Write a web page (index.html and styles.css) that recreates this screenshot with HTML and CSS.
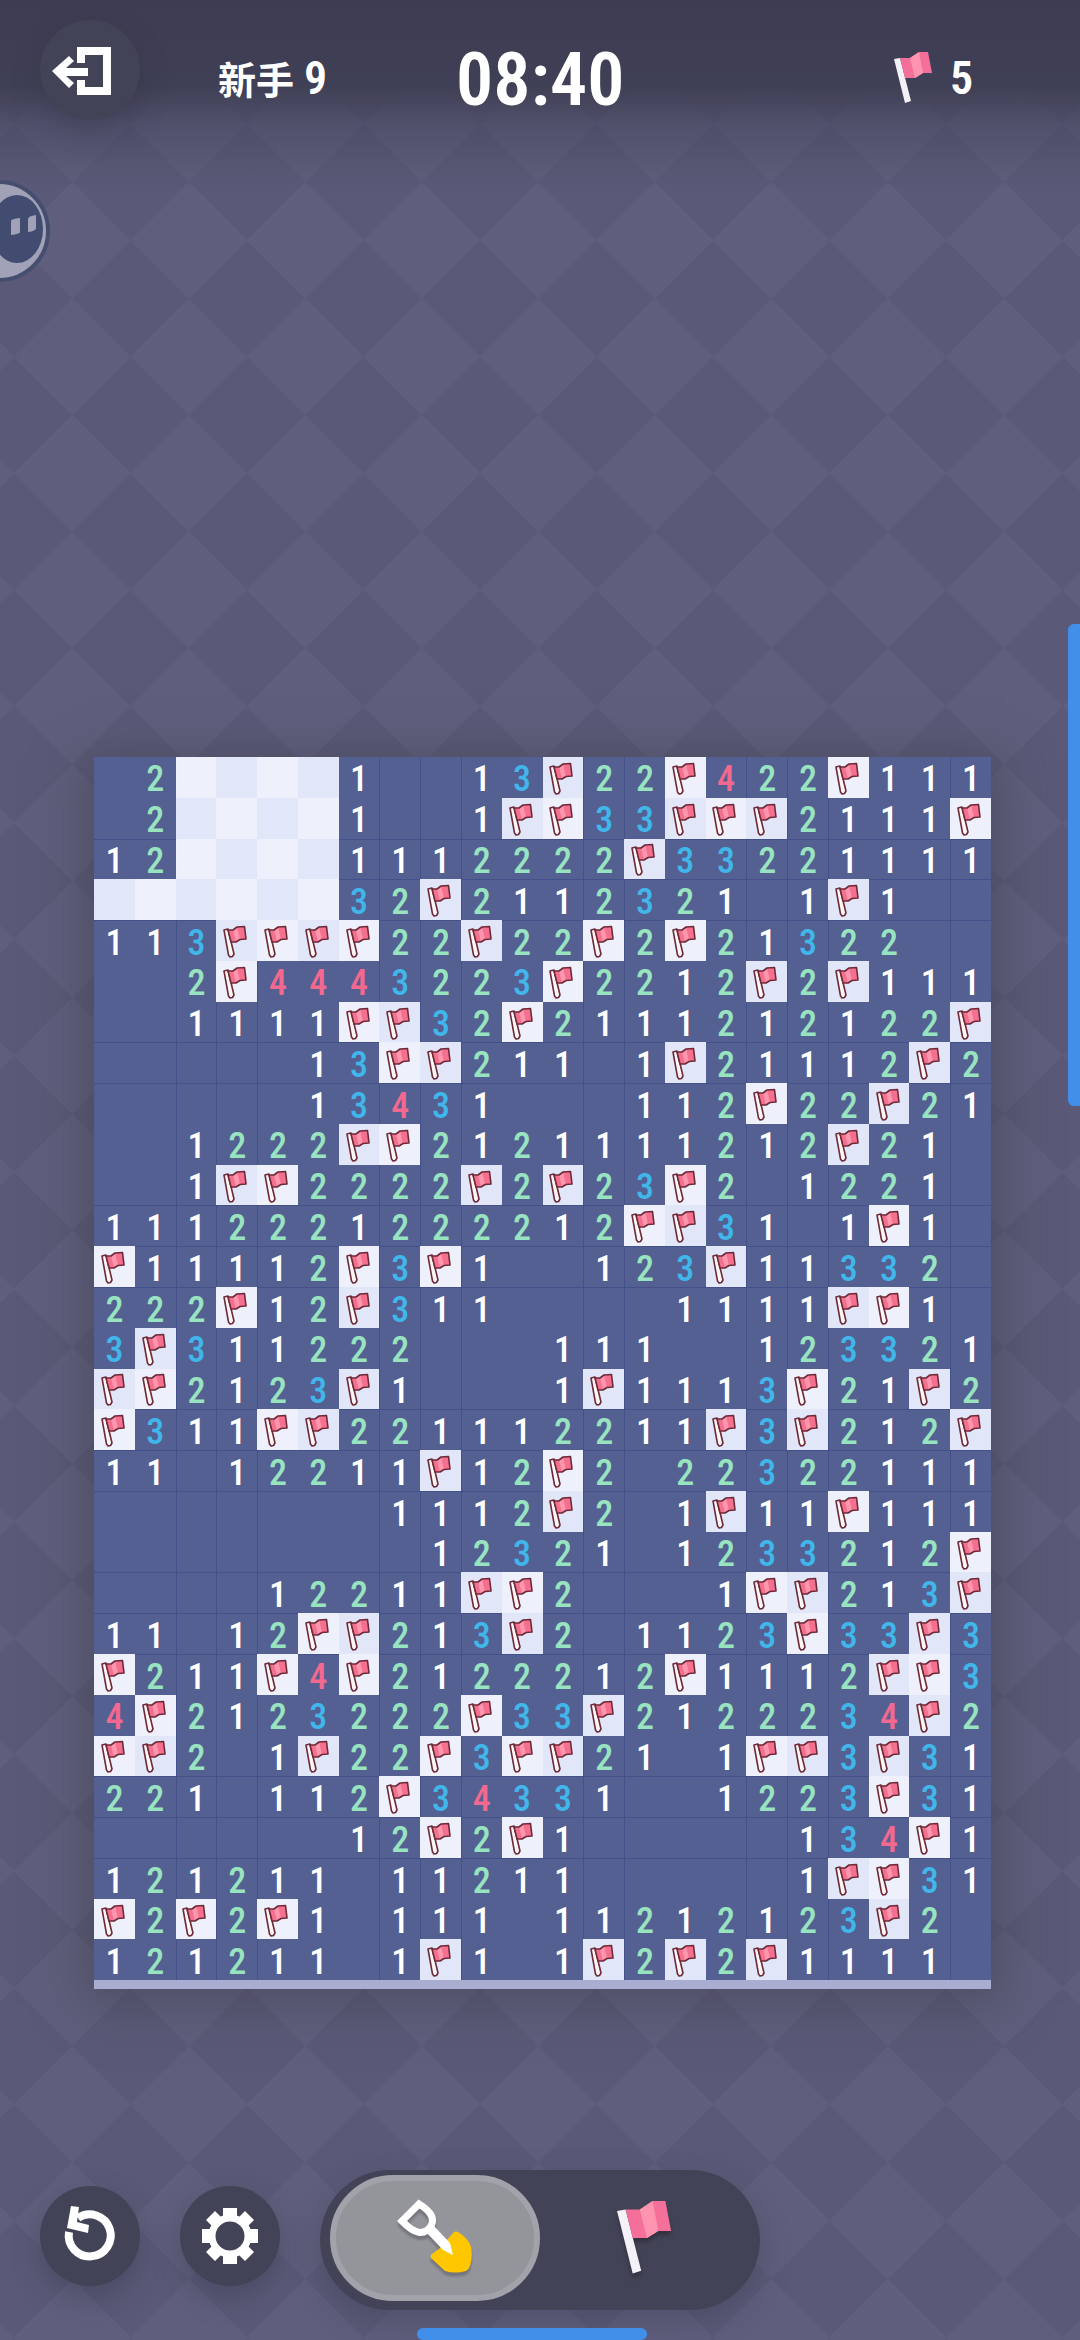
FILE: index.html
```html
<!DOCTYPE html>
<html lang="zh-CN">
<head>
<meta charset="utf-8">
<meta name="viewport" content="width=device-width, initial-scale=1">
<title>新手 9</title>
<link rel="stylesheet" href="styles.css">
</head>
<body>
<svg class="sprites" aria-hidden="true">
  <symbol id="flag" viewBox="0 0 40 52">
    <path fill="#f4f2f8" d="M0 7l6-1 11 43-6 2z"/>
    <path fill="#f4709a" d="M6 6h10l9-6h9l4 21h-9l-8 5H11z"/>
    <path fill="#ff94b0" d="M16 6l9-6 4 21-8 5z"/>
  </symbol>
  <symbol id="mine-flag" viewBox="0 0 41 41">
    <path fill="#fff6f6" stroke="#6e2a38" stroke-width="1.6" stroke-linejoin="round" d="M8 10l4-1 6 25-1.500 2.500-2.500.5-1.500-2z"/>
    <path fill="#f4708f" d="M12 10h5l4-3 7.500-.5L30 19l-6 .5-4 2.500h-5z"/>
    <path fill="#ff96ae" d="M17 10l4-3 3 12.500-4 2.500z"/>
    <path fill="none" stroke="#6e2a38" stroke-width="1.6" stroke-linejoin="round" d="M12 10h5l4-3 7.500-.5L30 19l-6 .5-4 2.500h-5z"/>
  </symbol>
</svg>

<div class="app">
  <header class="topbar">
    <button class="round exit" aria-label="退出">
      <svg viewBox="0 0 100 100">
        <path fill="#fff" d="M37 27h34v48H37V60h8v7h18V35h-18v8h-8z"/>
        <path fill="#fff" d="M12 51l17-15 5 5-8 7h22v8H26l8 7-5 5z"/>
      </svg>
    </button>
    <div class="level"><span class="level-name">新手</span><span class="count">9</span></div>
    <time class="timer">08:40</time>
    <div class="remaining"><svg class="flag-small"><use href="#flag"/></svg><span class="count">5</span></div>
  </header>

  <main class="field">
    <div class="board" id="board"></div>
  </main>

  <footer class="toolbar">
    <button class="round" aria-label="重新开始">
      <svg viewBox="0 0 100 100">
        <path fill="none" stroke="#fff" stroke-width="8" d="M29 46a21 21 0 1 0 9-14"/>
        <path fill="#fff" d="M31 20l8 1-2 15 12 3-1 8-21-5z"/>
      </svg>
    </button>
    <button class="round" aria-label="设置">
      <svg viewBox="0 0 100 100">
        <circle cx="50" cy="50" r="18" fill="none" stroke="#fff" stroke-width="7"/>
        <g fill="#fff">
          <path d="M43 22h14v9H43zM43 69h14v9H43zM22 43h9v14h-9zM69 43h9v14h-9z"/>
          <path d="M26 34l9-9 7 7-9 9zM58 32l7-7 9 9-7 7zM26 66l7-7 9 9-7 7zM58 68l9-9 7 7-9 9z"/>
        </g>
      </svg>
    </button>
    <div class="modes">
      <button class="mode active" aria-label="挖掘" aria-pressed="true">
        <svg class="shovel" viewBox="-2 0 80 80">
          <path fill="#ffc700" d="M57 34q2-1 4 0 11 7 13 15 2 10-1 19-1 3-4 5-11 3-21 0L34 60q-1-2 1-4l7-5z"/>
          <path fill="none" stroke="#fff" stroke-width="7" d="M22 6L5 23q19 20 29 5 6-11-12-22z"/>
          <path fill="#fff" d="M36 27l17 18 3 12-10-5-17-18z"/>
        </svg>
      </button>
      <button class="mode" aria-label="插旗" aria-pressed="false">
        <svg class="flag-large"><use href="#flag"/></svg>
      </button>
    </div>
  </footer>
</div>

<svg class="assistant" viewBox="0 0 52 104" aria-hidden="true">
  <circle cx="-1" cy="52" r="49" fill="#a1a2b8" stroke="#464e70" stroke-width="4"/>
  <ellipse cx="17" cy="50" rx="26" ry="34" fill="#414c70"/>
  <path fill="#a1a2b8" d="M11 42q0-2 9-3v14q0 2-9 3zM28 40q0-3 8-4v13q0 3-8 4z"/>
</svg>
<div class="edge-bar side"></div>
<div class="edge-bar bottom"></div>
<script src="board.js"></script>
</body>
</html>
```
FILE: styles.css
```css
* {
  box-sizing: border-box;
}

body {
  margin: 0;
  color: #fff;
  font-family: "Roboto Condensed", "Liberation Sans Narrow", Roboto, "Noto Sans CJK SC", sans-serif;
  background-color: #5a5977;
  background-image: url("data:image/svg+xml,%3Csvg xmlns='http://www.w3.org/2000/svg' viewBox='0 0 4 4'%3E%3Cpath fill='%235f5f7d' d='M1 0l1 1-1 1-1-1zM3 0l1 1-1 1-1-1zM1 2l1 1-1 1-1-1zM3 2l1 1-1 1-1-1z'/%3E%3C/svg%3E");
  background-size: 233px 233px;
  background-position: 14px 182px;
}

button {
  padding: 0;
  border: 0;
  color: inherit;
  font: inherit;
  cursor: pointer;
}

.sprites {
  position: absolute;
  width: 0;
  height: 0;
}

.app {
  display: flex;
  flex-direction: column;
  min-height: 100vh;
}

/* Top bar */
.topbar {
  display: grid;
  grid-template-columns: 178px 1fr 168px 1fr 178px;
  align-items: start;
  height: 190px;
  padding: 20px 40px 0;
  background: linear-gradient(#3d3c52, #3f3f55 45%, rgba(70, 70, 95, 0.6) 65%, rgba(90, 89, 119, 0));
}

.round {
  width: 100px;
  height: 100px;
  border-radius: 50%;
  background: #434357;
  box-shadow: 0 12px 28px rgba(50, 50, 70, 0.35);
}

.round svg {
  display: block;
  width: 100px;
  height: 100px;
}

.level,
.remaining {
  display: flex;
  align-items: center;
  height: 116px;
}

.level {
  gap: 10px;
}

.level-name {
  font-family: "Noto Sans CJK SC", sans-serif;
  font-size: 38px;
  font-weight: 700;
  line-height: 40px;
}

.count {
  font-size: 46px;
  font-weight: 600;
  line-height: 52px;
}

.timer {
  font-size: 74px;
  font-weight: 600;
  line-height: 120px;
  text-align: center;
}

.remaining {
  grid-column: 5;
  gap: 16px;
  padding-left: 32px;
}

.flag-small {
  width: 40px;
  height: 52px;
}

/* Board */
.field {
  padding: 567px 89px 0 94px;
}

.board {
  display: grid;
  grid-template-columns: repeat(22, 1fr);
  grid-template-rows: repeat(30, 1fr);
  aspect-ratio: 22 / 30;
  box-shadow: 0 9px #a9add2, 0 12px 44px 12px rgba(66, 66, 80, 0.55);
}

.cell {
  display: flex;
  align-items: center;
  justify-content: center;
  min-width: 0;
  min-height: 0;
  padding-top: 4px;
  border-radius: 0;
  background: #536091;
  font-size: 36px;
  font-weight: 500;
  line-height: 36px;
}

.line-left {
  border-left: 1px solid #44508a;
}

.line-top {
  border-top: 1px solid #44508a;
}

.covered {
  padding: 0;
  background: #e1e6f9;
}

.covered.even {
  background: #eef0fc;
}

.covered svg {
  width: 41px;
  height: 41px;
  flex: none;
}

.n1 { color: #fff; }
.n2 { color: #98e3c0; }
.n3 { color: #41b6ea; }
.n4 { color: #f3688e; }

/* Bottom tools */
.toolbar {
  display: flex;
  align-items: center;
  gap: 40px;
  margin-top: auto;
  padding: 0 40px 30px;
}

.toolbar .round {
  margin-bottom: 8px;
}

.modes {
  display: flex;
  width: 440px;
  height: 140px;
  padding: 5px 10px;
  border-radius: 70px;
  background: #434357;
  box-shadow: 0 12px 32px rgba(50, 50, 70, 0.3);
}

.mode {
  display: flex;
  align-items: center;
  justify-content: center;
  width: 210px;
  height: 126px;
  border-radius: 63px;
  background: none;
}

.mode.active {
  border: 6px solid #a2a2ab;
  background: #94959b;
}

.shovel {
  width: 80px;
  height: 80px;
  filter: drop-shadow(0 4px 1px rgba(70, 70, 80, 0.4));
}

.flag-large {
  width: 57px;
  height: 74px;
  filter: drop-shadow(0 4px 2px rgba(30, 30, 40, 0.5));
}

/* System overlays */
.assistant {
  position: fixed;
  top: 179px;
  left: 0;
  width: 52px;
  height: 104px;
}

.edge-bar {
  position: fixed;
  background: #428fea;
}

.edge-bar.side {
  top: 624px;
  right: 0;
  width: 12px;
  height: 482px;
  border-radius: 6px 0 0 6px;
}

.edge-bar.bottom {
  bottom: 0;
  left: calc(50% - 123px);
  width: 230px;
  height: 12px;
  border-radius: 6px;
}
```
FILE: board.js
```js
// "." is an open empty cell, "#" a covered cell, "F" a flag, digits are mine counts.
const rows = [
  ".2####1..13F22F422F111",
  ".2####1..1FF33FFF2111F",
  "12####1112222F33221111",
  "######32F2112321.1F1..",
  "113FFFF22F22F2F21322..",
  "..2F4443223F2212F2F111",
  "..1111FF32F2111212122F",
  ".....13FF211.1F21112F2",
  ".....13431...112F22F21",
  "..1222FF2121111212F21.",
  "..1FF2222F2F23F2.1221.",
  "1112221222212FF31.1F1.",
  "F11112F3F1..123F11332.",
  "222F12F311....1111FF1.",
  "3F311222...111..123321",
  "FF2123F1...1F1113F21F2",
  "F311FF221112211F3F212F",
  "11.12211F12F2.22322111",
  ".......1112F2.1F11F111",
  "........12321.1233212F",
  "....12211FF2...1FF213F",
  "11.12FF213F2.1123F33F3",
  "F211F4F2122212F1112FF3",
  "4F2123222F33F2122234F2",
  "FF2.1F22F3FF21.1FF3F31",
  "221.112F34331..1223F31",
  "......12F2F1.....134F1",
  "121211.11211.....1FF31",
  "F2F2F1.111.11212123F2.",
  "121211.1F1.1F2F2F1111."
];
const lineCols = [2, 3, 4, 7, 8, 9, 12, 13, 16, 17, 18, 21];
const lineRows = [2, 3, 4, 7, 8, 11, 12, 13, 16, 17, 18, 20, 21, 22, 25, 26, 27];
const board = document.getElementById("board");

rows.forEach((row, r) => {
  [...row].forEach((mark, c) => {
    const cell = document.createElement("button");
    cell.className = "cell";
    if (mark === "#" || mark === "F") {
      cell.classList.add("covered");
      if ((r + c) % 2 === 0) cell.classList.add("even");
      if (mark === "F") cell.innerHTML = '<svg><use href="#mine-flag"/></svg>';
    } else {
      if (lineCols.includes(c)) cell.classList.add("line-left");
      if (lineRows.includes(r)) cell.classList.add("line-top");
      if (mark !== ".") {
        cell.classList.add("n" + mark);
        cell.textContent = mark;
      }
    }
    board.append(cell);
  });
});
```
